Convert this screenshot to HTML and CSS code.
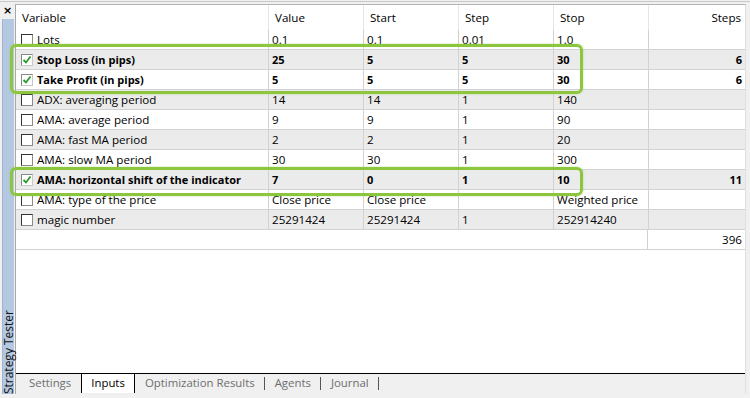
FILE: index.html
```html
<!DOCTYPE html>
<html>
<head>
<meta charset="utf-8">
<link rel="stylesheet" href="styles.css">
</head>
<body>
<div class="window">
  <aside class="side">
    <span class="close">×</span>
    <div class="strip"><span class="vtext">Strategy Tester</span></div>
  </aside>
  <main class="panel">
    <div class="grid">
      <div class="row head">
        <div class="c">Variable</div><div class="c">Value</div><div class="c">Start</div><div class="c">Step</div><div class="c">Stop</div><div class="c r">Steps</div>
      </div>
      <div class="row">
        <div class="c"><span class="cb"></span>Lots</div><div class="c">0.1</div><div class="c">0.1</div><div class="c">0.01</div><div class="c">1.0</div><div class="c r"></div>
      </div>
      <div class="row alt b">
        <div class="c"><span class="cb on"><svg viewBox="0 0 10 10"><path d="M1.5 5 L4 7.5 L8.5 1.5" /></svg></span>Stop Loss (in pips)</div><div class="c">25</div><div class="c">5</div><div class="c">5</div><div class="c">30</div><div class="c r">6</div>
      </div>
      <div class="row b">
        <div class="c"><span class="cb on"><svg viewBox="0 0 10 10"><path d="M1.5 5 L4 7.5 L8.5 1.5" /></svg></span>Take Profit (in pips)</div><div class="c">5</div><div class="c">5</div><div class="c">5</div><div class="c">30</div><div class="c r">6</div>
      </div>
      <div class="row alt">
        <div class="c"><span class="cb"></span>ADX: averaging period</div><div class="c">14</div><div class="c">14</div><div class="c">1</div><div class="c">140</div><div class="c r"></div>
      </div>
      <div class="row">
        <div class="c"><span class="cb"></span>AMA: average period</div><div class="c">9</div><div class="c">9</div><div class="c">1</div><div class="c">90</div><div class="c r"></div>
      </div>
      <div class="row alt">
        <div class="c"><span class="cb"></span>AMA: fast MA period</div><div class="c">2</div><div class="c">2</div><div class="c">1</div><div class="c">20</div><div class="c r"></div>
      </div>
      <div class="row">
        <div class="c"><span class="cb"></span>AMA: slow MA period</div><div class="c">30</div><div class="c">30</div><div class="c">1</div><div class="c">300</div><div class="c r"></div>
      </div>
      <div class="row alt b">
        <div class="c"><span class="cb on"><svg viewBox="0 0 10 10"><path d="M1.5 5 L4 7.5 L8.5 1.5" /></svg></span>AMA: horizontal shift of the indicator</div><div class="c">7</div><div class="c">0</div><div class="c">1</div><div class="c">10</div><div class="c r">11</div>
      </div>
      <div class="row">
        <div class="c"><span class="cb"></span>AMA: type of the price</div><div class="c">Close price</div><div class="c">Close price</div><div class="c"></div><div class="c">Weighted price</div><div class="c r"></div>
      </div>
      <div class="row alt">
        <div class="c"><span class="cb"></span>magic number</div><div class="c">25291424</div><div class="c">25291424</div><div class="c">1</div><div class="c">252914240</div><div class="c r"></div>
      </div>
      <div class="row total">
        <div class="c span"></div><div class="c r">396</div>
      </div>
    </div>
    <nav class="tabs">
      <span class="tab">Settings</span>
      <span class="tab active">Inputs</span>
      <span class="tab sep">Optimization Results</span>
      <span class="tab sep">Agents</span>
      <span class="tab sep">Journal</span>
    </nav>
  </main>
  <div class="hl hl1"></div>
  <div class="hl hl2"></div>
</div>
</body>
</html>
```

FILE: styles.css
```css
* { box-sizing: border-box; }
html, body { margin: 0; padding: 0; }
body {
  background: #f0f0f0;
  font-family: "Open Sans", "Liberation Sans", sans-serif;
  font-size: 11.6px;
  color: #000;
}
.window {
  position: relative;
  width: 750px;
  height: 398px;
  display: flex;
  border-top: 1px solid #c8c8c8;
  margin-top: 1px;
  padding-bottom: 2px;
  border-bottom: 1px solid #a0a0a0;
  overflow: hidden;
}
.side {
  width: 15px;
  display: flex;
  flex-direction: column;
  align-items: flex-start;
}
.close {
  font-family: "DejaVu Sans", sans-serif;
  font-weight: bold;
  font-size: 11px;
  line-height: 12px;
  margin: 3px 0 0 3px;
  height: 14px;
}
.strip {
  flex: 1;
  width: 12px;
  margin-left: 2px;
  margin-bottom: 2px;
  background: #b4c8e2;
  border-left: 1px solid #9fb5d2;
  display: flex;
  align-items: flex-end;
  justify-content: center;
}
.vtext {
  writing-mode: vertical-rl;
  transform: rotate(180deg);
  font-size: 12px;
  line-height: 12px;
  white-space: nowrap;
  color: #111;
}
.panel {
  flex: 1;
  margin: 2px 4px 2px 0;
  border-top: 1px solid #b4b4b4;
  border-left: 1px solid #a8a8a8;
  border-right: 1px solid #e0e0e0;
  background: #fff;
  display: flex;
  flex-direction: column;
}
.grid { flex: 1; }
.row {
  display: grid;
  grid-template-columns: 253px 95px 95px 95px 95px 1fr;
  height: 20px;
  border-bottom: 1px solid #d2d2d2;
}
.row.alt { background: #ebebeb; }
.row.b { font-weight: bold; font-size: 11px; }
.c {
  border-right: 1px solid #d2d2d2;
  padding: 0 3px;
  line-height: 19px;
  white-space: nowrap;
  overflow: hidden;
  display: flex;
  align-items: center;
}
.c.r { justify-content: flex-end; border-right: none; padding-right: 3px; }
.row.head { height: 25px; border-bottom: none; }
.row.head .c { border-right-color: #e6e6e6; padding-left: 6px; line-height: 25px; }
.row.head .c.r { padding-right: 4px; }
.row.head .c:first-child { padding-left: 6px; }
.row .c:first-child { padding-left: 5px; }
.row.total { grid-template-columns: 632px 1fr; }
.cb {
  width: 12px;
  height: 12px;
  margin-right: 4px;
  flex: none;
  background: #fff;
  border: 1px solid #333;
  border-right-color: #8a8a8a;
  border-bottom-color: #8a8a8a;
  display: inline-flex;
  align-items: center;
  justify-content: center;
}
.cb.on { border-color: #888 #c8c8c8 #c8c8c8 #888; }
.cb svg { width: 10px; height: 10px; }
.cb svg path { fill: none; stroke: #2a9a2a; stroke-width: 1.8; }
.tabs {
  height: 21px;
  background: #f0f0f0;
  border-top: 1px solid #000;
  display: flex;
  align-items: flex-start;
  padding-left: 2px;
}
.tab {
  padding: 0 10px;
  color: #6e6e6e;
  line-height: 18px;
  font-size: 11.4px;
  position: relative;
}
.tab:first-child { padding-left: 11px; }
.tab.active {
  color: #000;
  background: #fff;
  border: 1px solid #000;
  border-bottom: none;
  border-top: none;
  height: 19px;
  line-height: 18px;
  padding: 0 9px;
}
.tab.sep::after {
  content: "";
  position: absolute;
  right: 0;
  top: 3px;
  width: 1px;
  height: 13px;
  background: #555;
}
.hl {
  position: absolute;
  border: 3px solid #8cc63e;
  border-radius: 6px;
  box-shadow: 0 0 2px rgba(140, 198, 62, 0.6);
  pointer-events: none;
}
.hl1 { left: 10px; top: 42px; width: 573px; height: 50px; }
.hl2 { left: 10px; top: 165px; width: 573px; height: 29px; }
```
